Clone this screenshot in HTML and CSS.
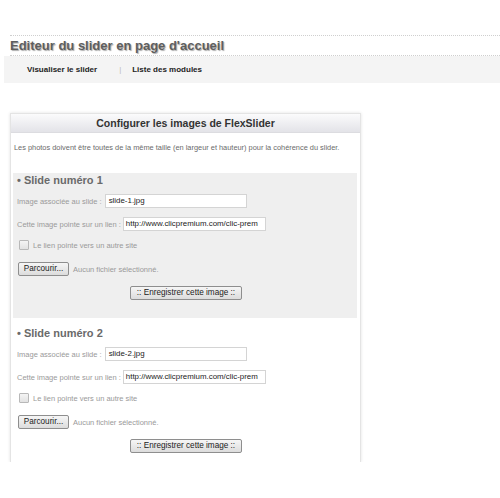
FILE: index.html
```html
<!DOCTYPE html>
<html>
<head>
<meta charset="utf-8">
<link rel="stylesheet" href="styles.css">
</head>
<body>
<div class="page-head">
  <h1 class="page-title">Editeur du slider en page d'accueil</h1>
</div>
<nav class="subnav">
  <a class="subnav-link first">Visualiser le slider</a>
  <span class="subnav-sep">|</span>
  <a class="subnav-link">Liste des modules</a>
</nav>
<section class="panel">
  <h2 class="panel-title">Configurer les images de FlexSlider</h2>
  <p class="panel-desc">Les photos doivent être toutes de la même taille (en largeur et hauteur) pour la cohérence du slider.</p>

  <div class="slide shaded">
    <h3 class="slide-title">• Slide numéro 1</h3>
    <div class="row r1"><span class="lbl">Image associée au slide :</span><span class="input">slide-1.jpg</span></div>
    <div class="row r2"><span class="lbl">Cette image pointe sur un lien :</span><span class="input">http://www.clicpremium.com/clic-prem</span></div>
    <div class="row r3"><span class="check"></span><span class="lbl">Le lien pointe vers un autre site</span></div>
    <div class="row r4"><span class="btn">Parcourir...</span><span class="lbl">Aucun fichier sélectionné.</span></div>
    <div class="row r5"><span class="btn save">:: Enregistrer cette image ::</span></div>
  </div>

  <div class="slide second">
    <h3 class="slide-title">• Slide numéro 2</h3>
    <div class="row r1"><span class="lbl">Image associée au slide :</span><span class="input">slide-2.jpg</span></div>
    <div class="row r2"><span class="lbl">Cette image pointe sur un lien :</span><span class="input">http://www.clicpremium.com/clic-prem</span></div>
    <div class="row r3"><span class="check"></span><span class="lbl">Le lien pointe vers un autre site</span></div>
    <div class="row r4"><span class="btn">Parcourir...</span><span class="lbl">Aucun fichier sélectionné.</span></div>
    <div class="row r5"><span class="btn save">:: Enregistrer cette image ::</span></div>
  </div>
</section>
</body>
</html>
```
FILE: styles.css
```css
html, body {
  margin: 0;
  padding: 0;
  background: #fff;
  font-family: "Liberation Sans", Arial, sans-serif;
}
.page-head {
  margin: 35px 0 0 10px;
  border-top: 1px dotted #cfcfcf;
  border-bottom: 1px dotted #cfcfcf;
  height: 19px;
}
.page-title {
  margin: 0;
  font-size: 13px;
  line-height: 19px;
  font-weight: bold;
  color: #5e5e5e;
  text-shadow: 1px 1px 1px #aaa;
}
.subnav {
  margin-left: 4px;
  height: 27px;
  background: #f4f4f4;
  display: flex;
  align-items: center;
  font-size: 8px;
  font-weight: bold;
  color: #222;
}
.subnav-link.first { margin-left: 23px; }
.subnav-sep {
  margin: 0 11px 0 22px;
  color: #bbb;
  font-weight: normal;
}
.panel {
  margin: 30px 0 0 10px;
  width: 349px;
  height: 348px;
  border: 1px solid #e4e4e4;
  border-bottom: none;
  box-shadow: 0 0 3px rgba(0,0,0,0.12);
  box-sizing: content-box;
}
.panel-title {
  margin: 0;
  height: 18px;
  line-height: 19px;
  text-align: center;
  font-size: 10.5px;
  font-weight: bold;
  color: #333;
  background: linear-gradient(#fbfbfc, #e3e3e8);
  border-bottom: 1px solid #dcdce0;
}
.panel-desc {
  margin: 10px 0 0 3px;
  font-size: 7.4px;
  line-height: 10px;
  color: #6a6a6a;
}
.slide {
  margin: 20px 3px 0 2px;
  padding: 0 4px 18px 4px;
}
.slide.shaded { background: #efefef; }
.slide.second { margin-top: 8px; padding-bottom: 0; }
.slide-title {
  margin: 0;
  height: 14px;
  line-height: 14px;
  font-size: 11px;
  font-weight: bold;
  color: #6a6a6a;
}
.row {
  display: flex;
  align-items: center;
  height: 14px;
}
.r1 { margin-top: 7px; }
.r2 { margin-top: 9px; }
.r3 { margin-top: 9px; height: 10px; }
.r4 { margin-top: 12px; }
.r5 { margin-top: 10px; justify-content: center; }
.lbl {
  font-size: 7.5px;
  color: #9a9a9a;
}
.input {
  margin-left: 3px;
  width: 134px;
  height: 12px;
  padding: 0 3px;
  border: 1px solid #d4d4d4;
  background: #fff;
  font-size: 7.9px;
  line-height: 12px;
  color: #222;
  white-space: nowrap;
  overflow: hidden;
}
.r2 .input { margin-left: 2px; padding: 0 1px 0 2px; width: 138px; }
.check {
  margin: 0 4px 0 2px;
  width: 8px;
  height: 8px;
  border: 1px solid #b8b8b8;
  background: linear-gradient(#f4f4f4, #e2e2e2);
  border-radius: 1px;
}
.btn {
  margin-left: 1px;
  height: 12px;
  padding: 0 4px;
  border: 1px solid #8e8e8e;
  border-radius: 2px;
  background: linear-gradient(#f6f6f6, #dcdcdc);
  font-size: 8.2px;
  line-height: 12px;
  color: #222;
  white-space: nowrap;
}
.r4 .btn { width: 41px; text-align: center; }
.r4 .lbl { margin-left: 4px; }
.btn.save { width: 102px; text-align: center; margin-left: 2px; }
```
